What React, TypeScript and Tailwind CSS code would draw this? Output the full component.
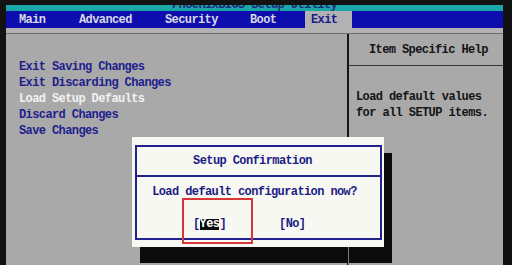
import React from "react";

const menuItems = [
  "Exit Saving Changes",
  "Exit Discarding Changes",
  "Load Setup Defaults",
  "Discard Changes",
  "Save Changes",
];

function MenuBar() {
  return (
    <div className="flex h-[17px] items-stretch bg-[#0e0eae] pl-[13px] text-[#d8d8e6]">
      <span className="flex w-[60px] items-center">Main</span>
      <span className="flex w-[86px] items-center">Advanced</span>
      <span className="flex w-[85px] items-center">Security</span>
      <span className="flex w-[55px] items-center">Boot</span>
      <span className="flex w-[47px] items-center bg-[#b2b2b2] pl-[6px] text-[#1a1a8c]">
        Exit
      </span>
    </div>
  );
}

function ConfirmDialog() {
  return (
    <div className="absolute left-[132px] top-[137px] h-[110px] w-[252px] bg-[#f8f8f3] pb-[7px] pl-[3px] pr-[2px] pt-[8px] shadow-[8px_16px_0_#0b0b0b]">
      <div className="flex h-full flex-col border-2 border-[#23238f] text-[#1c1c86]">
        <div className="flex h-[30px] shrink-0 items-center justify-center border-b-2 border-[#23238f] pr-[12px]">
          Setup Confirmation
        </div>
        <div className="mt-[7px] pr-[8px] text-center">Load default configuration now?</div>
        <div className="mt-[16px] flex pl-[56px]">
          <span>
            [<span className="inline-block bg-[#0a0a0a] leading-[11px] text-white">Yes</span>]
          </span>
          <span className="ml-[53px]">[No]</span>
        </div>
      </div>
    </div>
  );
}

export default function App() {
  return (
    <div className="relative h-[265px] w-[512px] overflow-hidden bg-[#121212] pl-[6px] pr-[9px] pt-[5px] font-['Liberation_Mono','DejaVu_Sans_Mono',monospace] text-[12px] font-bold leading-4 tracking-[-0.6px]">
      <div className="flex h-full flex-col bg-[#a9a9a9]">
        <div className="flex h-[6px] justify-center overflow-hidden bg-[#1ba6a7]">
          <span className="-mt-[6px] leading-[12px] text-[#1b2a7c]">PhoenixBIOS Setup Utility</span>
        </div>

        <MenuBar />

        <div className="h-[5px] bg-[#b2b2b2]" />
        <div className="h-px bg-[#6c6c6c]" />

        <div className="flex flex-1">
          <div className="w-[341px] pl-[13px] pt-[25px]">
            {menuItems.map((item) => (
              <div
                key={item}
                className={item === "Load Setup Defaults" ? "text-[#f2f2f2]" : "text-[#1e1e8e]"}
              >
                {item}
              </div>
            ))}
          </div>

          <div className="w-[2px] bg-[#161616]" />

          <div className="flex flex-1 flex-col text-[#141414]">
            <div className="flex h-[32px] items-center border-b border-[#3a3a3a] pl-[20px]">
              Item Specific Help
            </div>
            <div className="pl-[7px] pt-[23px]">
              <div>Load default values</div>
              <div>for all SETUP items.</div>
            </div>
          </div>
        </div>
      </div>

      <ConfirmDialog />

      {/* divider shows through the dialog shadow */}
      <div className="absolute left-[348px] top-[247px] h-[18px] w-px bg-[#7a7a7a]" />

      {/* annotation box round [Yes] */}
      <div className="absolute left-[182px] top-[198px] h-[46px] w-[71px] border-2 border-[#d8373a]" />
    </div>
  );
}
